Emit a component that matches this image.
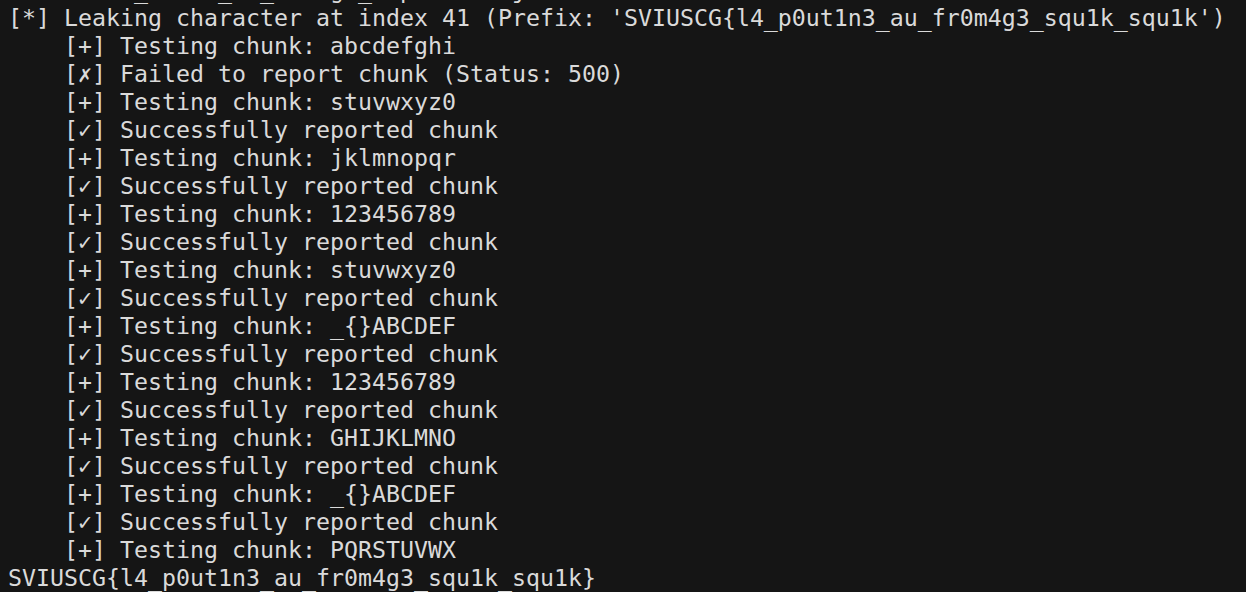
import React from "react";

const FLAG = "SVIUSCG{l4_p0ut1n3_au_fr0m4g3_squ1k_squ1k";

const chunks = [
  ["+", "Testing chunk: abcdefghi"],
  ["✗", "Failed to report chunk (Status: 500)"],
  ["+", "Testing chunk: stuvwxyz0"],
  ["✓", "Successfully reported chunk"],
  ["+", "Testing chunk: jklmnopqr"],
  ["✓", "Successfully reported chunk"],
  ["+", "Testing chunk: 123456789"],
  ["✓", "Successfully reported chunk"],
  ["+", "Testing chunk: stuvwxyz0"],
  ["✓", "Successfully reported chunk"],
  ["+", "Testing chunk: _{}ABCDEF"],
  ["✓", "Successfully reported chunk"],
  ["+", "Testing chunk: 123456789"],
  ["✓", "Successfully reported chunk"],
  ["+", "Testing chunk: GHIJKLMNO"],
  ["✓", "Successfully reported chunk"],
  ["+", "Testing chunk: _{}ABCDEF"],
  ["✓", "Successfully reported chunk"],
  ["+", "Testing chunk: PQRSTUVWX"],
];

const App = () => {
  return (
    <div className="w-[1246px] h-[592px] overflow-hidden bg-[#151515] text-[#dadada]">
      <div
        className="-mt-[24px] pl-[8px] text-[23.25px] leading-[28px] whitespace-pre"
        style={{ fontFamily: '"DejaVu Sans Mono", "Liberation Mono", monospace' }}
      >
        <div>{"         _     _  _    g _  p       j"}</div>
        <div>{`[*] Leaking character at index 41 (Prefix: '${FLAG}')`}</div>
        {chunks.map(([mark, text], i) => (
          <div key={i}>{`    [${mark}] ${text}`}</div>
        ))}
        <div>{`${FLAG}}`}</div>
      </div>
    </div>
  );
};

export default App;
